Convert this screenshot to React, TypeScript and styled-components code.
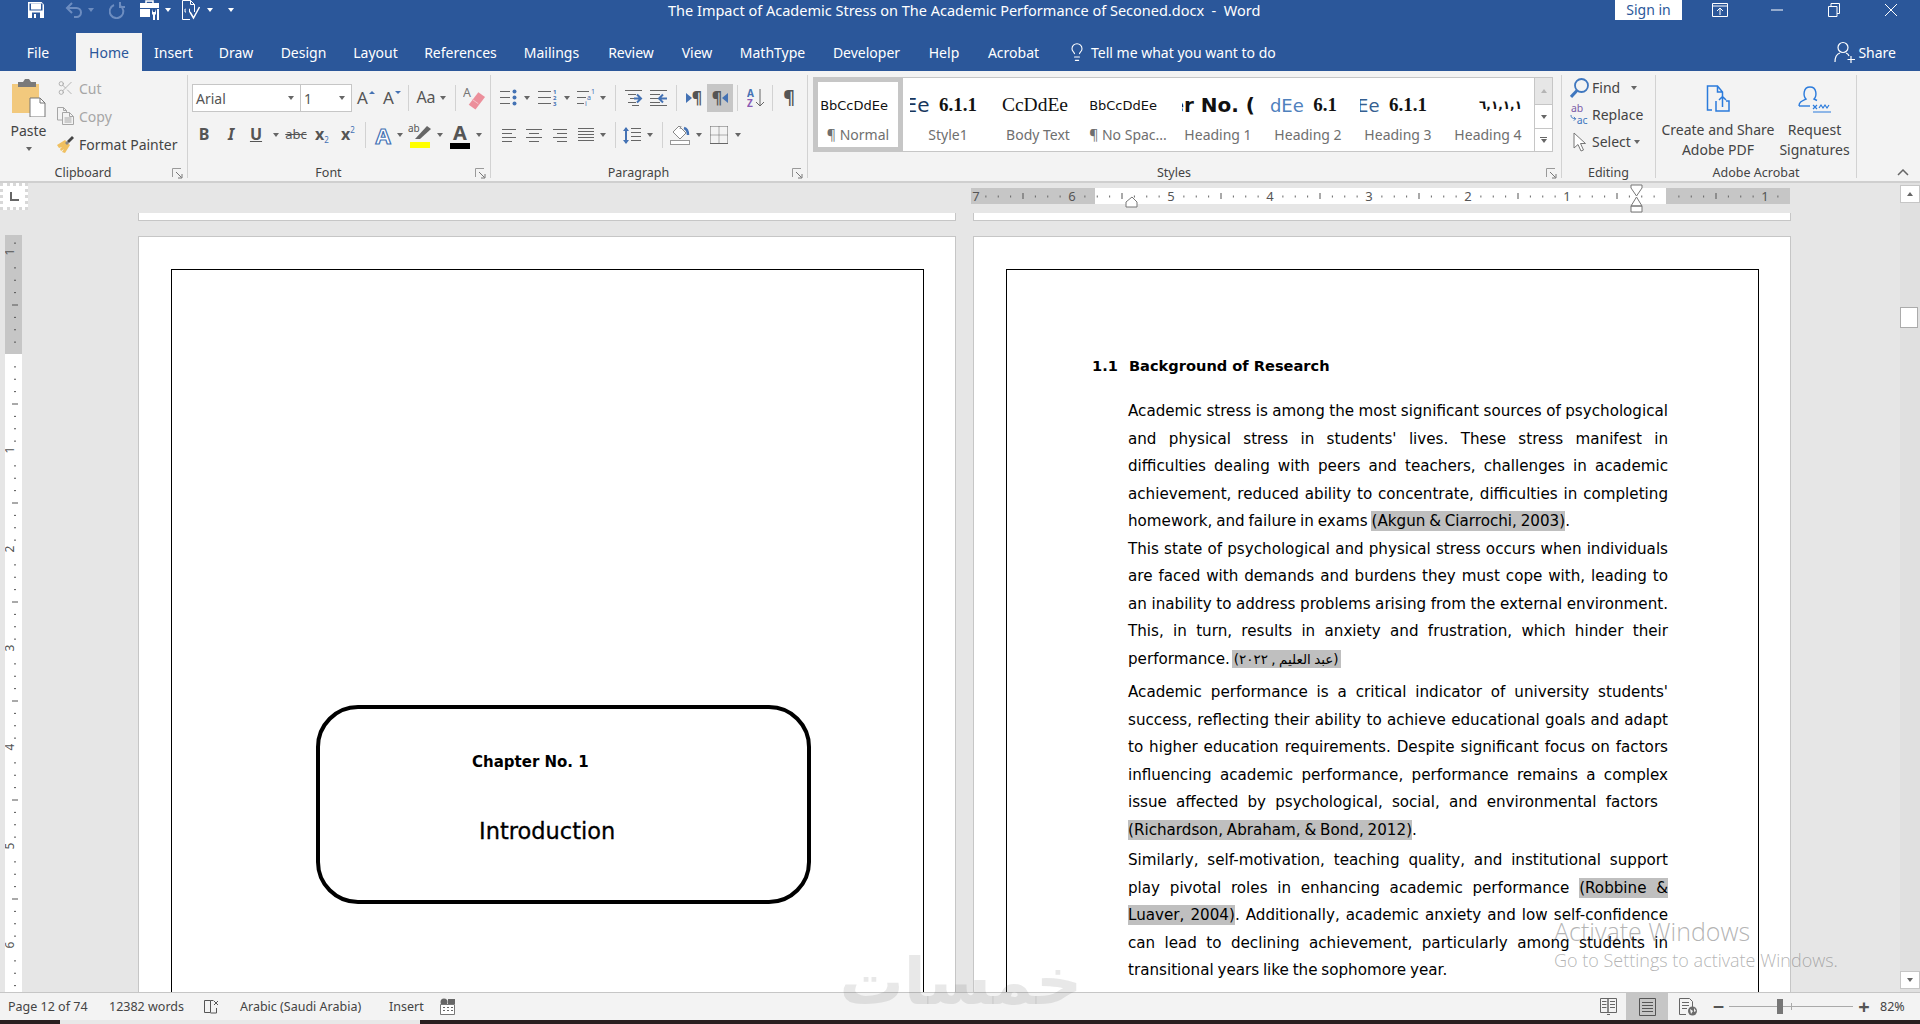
import styled, { createGlobalStyle } from "styled-components";
import { Lightbulb, Scissors } from "lucide-react";

const GlobalStyle = createGlobalStyle`
  html, body {
    margin: 0;
    padding: 0;
    height: 100%;
    overflow: hidden;
    background: #e6e6e6;
  }
  * { box-sizing: border-box; }
`;

const UI = `"Noto Sans", "Open Sans", sans-serif`;
const DOC = `"DejaVu Sans", "Noto Sans", sans-serif`;
const BLUE = "#2b579a";
const GREY = "#666666";
const ICON_BLUE = "#4472b4";
const ACROBAT = "#2b7bdc";

const Window = styled.div`
  position: relative;
  width: 1920px;
  height: 1024px;
  overflow: hidden;
  display: flex;
  flex-direction: column;
  font-family: ${UI};
  color: #444;
`;

/* ---------- title bar and tabs ---------- */
const TitleBar = styled.div`
  height: 33px;
  flex: none;
  background: ${BLUE};
  display: flex;
  align-items: flex-start;
  color: #fff;
`;
const QuickAccess = styled.div`
  width: 668px;
  height: 20px;
  flex: none;
  padding-left: 28px;
  display: flex;
  align-items: center;
`;
const QatSlot = styled.div<{ $w: number }>`
  width: ${(p) => p.$w}px;
  flex: none;
  display: flex;
  align-items: center;
`;
const DocTitle = styled.div`
  font-size: 14.5px;
  line-height: 20px;
  white-space: pre;
`;
const SignIn = styled.div`
  margin-left: auto;
  width: 67px;
  height: 20px;
  background: #fff;
  color: ${BLUE};
  font-size: 14px;
  line-height: 20px;
  text-align: center;
`;
const WinButtons = styled.div`
  width: 229px;
  margin-left: 9px;
  height: 20px;
  display: grid;
  grid-template-columns: repeat(4, 1fr);
  place-items: center;
`;
const TabBar = styled.div`
  height: 38px;
  flex: none;
  background: ${BLUE};
  display: flex;
  align-items: stretch;
`;
const Tab = styled.div<{ $w: number; $active?: boolean }>`
  width: ${(p) => p.$w}px;
  flex: none;
  display: flex;
  align-items: center;
  justify-content: center;
  font-size: 14px;
  color: ${(p) => (p.$active ? BLUE : "#fff")};
  background: ${(p) => (p.$active ? "#f3f3f3" : "transparent")};
`;
const TellMe = styled.div`
  margin-left: 15px;
  display: flex;
  align-items: center;
  gap: 4px;
  color: #fff;
  font-size: 14px;
`;
const Share = styled.div`
  margin-left: auto;
  margin-right: 24px;
  display: flex;
  align-items: center;
  gap: 2px;
  color: #fff;
  font-size: 14px;
`;

/* ---------- ribbon ---------- */
const Ribbon = styled.div`
  height: 112px;
  flex: none;
  background: #f3f3f3;
  border-bottom: 2px solid #cfcfcf;
  padding-top: 4px;
  display: flex;
  position: relative;
`;
const Group = styled.div<{ $w: number }>`
  width: ${(p) => p.$w}px;
  height: 103px;
  flex: none;
  border-right: 1px solid #d2d2d2;
  display: flex;
  flex-direction: column;
`;
const GroupBody = styled.div<{ $top?: number; $left?: number }>`
  flex: 1;
  display: flex;
  min-height: 0;
  padding-top: ${(p) => p.$top ?? 0}px;
  padding-left: ${(p) => p.$left ?? 0}px;
`;
const GroupFoot = styled.div<{ $launcher?: boolean }>`
  height: 16px;
  flex: none;
  margin-bottom: -3px;
  display: grid;
  grid-template-columns: 1fr ${(p) => (p.$launcher ? "21px" : "0")};
  align-items: center;
  justify-items: end;
  & > svg {
    margin-right: 4px;
  }
`;
const GroupLabel = styled.div`
  justify-self: stretch;
  font-size: 12.5px;
  line-height: 16px;
  text-align: center;
  color: #444;
`;
const Stack = styled.div`
  display: flex;
  flex-direction: column;
  gap: 9px;
`;
const ToolRow = styled.div`
  display: flex;
  align-items: center;
  height: 28px;
`;
const Slot = styled.div<{ $w: number; $active?: boolean }>`
  width: ${(p) => p.$w}px;
  height: 28px;
  flex: none;
  display: flex;
  align-items: center;
  justify-content: center;
  background: ${(p) => (p.$active ? "#c6c6c6" : "transparent")};
`;
const Sep = styled.div`
  width: 1px;
  height: 26px;
  background: #d2d2d2;
`;
const Caret = styled.span<{ $color?: string }>`
  display: inline-block;
  width: 0;
  height: 0;
  border-left: 3.5px solid transparent;
  border-right: 3.5px solid transparent;
  border-top: 4px solid ${(p) => p.$color ?? "#666"};
`;
const ComboBox = styled.div<{ $w: number }>`
  width: ${(p) => p.$w}px;
  height: 28px;
  flex: none;
  background: #fff;
  border: 1px solid #c6c6c6;
  margin-right: -1px;
  padding: 0 6px 0 3px;
  display: flex;
  align-items: center;
  justify-content: space-between;
  font-size: 14px;
  color: #555;
`;
const Glyph = styled.span<{ $size?: number; $bold?: boolean; $italic?: boolean; $line?: string; $font?: string }>`
  font-family: ${(p) => p.$font ?? UI};
  font-size: ${(p) => p.$size ?? 15}px;
  font-weight: ${(p) => (p.$bold ? 700 : 400)};
  font-style: ${(p) => (p.$italic ? "italic" : "normal")};
  text-decoration: ${(p) => p.$line ?? "none"};
  color: #555;
  line-height: 1.2;
  white-space: nowrap;
`;
const Sub = styled.span<{ $up?: boolean }>`
  font-size: 8px;
  font-weight: 400;
  color: ${ICON_BLUE};
  vertical-align: ${(p) => (p.$up ? "7px" : "-3px")};
`;
const TinyArrow = styled.span<{ $down?: boolean }>`
  display: inline-block;
  width: 0;
  height: 0;
  margin: 0 0 12px 1px;
  border-left: 3px solid transparent;
  border-right: 3px solid transparent;
  border-bottom: ${(p) => (p.$down ? "none" : `3px solid ${ICON_BLUE}`)};
  border-top: ${(p) => (p.$down ? `3px solid ${ICON_BLUE}` : "none")};
`;
const ColorA = styled.div`
  display: flex;
  flex-direction: column;
  align-items: center;
  line-height: 1;
`;
const ColorBar = styled.div<{ $color: string }>`
  width: 20px;
  height: 6px;
  background: ${(p) => p.$color};
  margin-top: -2px;
`;
const EffectA = styled.span`
  font-family: ${UI};
  font-size: 22px;
  font-weight: 700;
  line-height: 1.2;
  color: #fff;
  -webkit-text-stroke: 1.2px ${ICON_BLUE};
`;

/* clipboard */
const PasteCol = styled.div`
  width: 57px;
  flex: none;
  display: flex;
  flex-direction: column;
  align-items: center;
  padding-top: 4px;
`;
const PasteLabel = styled.div`
  font-size: 14px;
  line-height: 18px;
  margin-top: 5px;
  margin-bottom: 7px;
`;
const ClipList = styled.div`
  display: flex;
  flex-direction: column;
  margin-top: -1px;
`;
const ClipRow = styled.div<{ $muted?: boolean }>`
  height: 28px;
  display: flex;
  align-items: center;
  gap: 5px;
  font-size: 14px;
  color: ${(p) => (p.$muted ? "#a6a6a6" : "#444")};
`;
const ClipIcon = styled.div`
  width: 17px;
  display: flex;
  justify-content: center;
`;

/* styles gallery */
const Gallery = styled.div`
  margin: 2px 0 0 5px;
  width: 740px;
  height: 75px;
  background: #fff;
  border: 1px solid #c6c6c6;
  display: flex;
`;
const StyleItem = styled.div<{ $active?: boolean }>`
  width: 90px;
  flex: none;
  overflow: hidden;
  display: flex;
  flex-direction: column;
  align-items: center;
  border: ${(p) => (p.$active ? "5px solid #c6c6c6" : "none")};
  margin-top: ${(p) => (p.$active ? "-1px" : "0")};
  height: ${(p) => (p.$active ? "75px" : "100%")};
  margin-left: ${(p) => (p.$active ? "-1px" : "0")};
  padding-top: ${(p) => (p.$active ? "11px" : "15px")};
`;
const Preview = styled.div<{ $left: number; $right: number }>`
  align-self: stretch;
  height: 24px;
  overflow: hidden;
  display: flex;
  align-items: center;
  justify-content: flex-end;
  margin: 0 ${(p) => p.$right}px 0 ${(p) => p.$left}px;
  white-space: pre;
  flex: none;
`;
const PreviewText = styled.span<{ $font?: string; $size?: number; $bold?: boolean; $color?: string }>`
  font-family: ${(p) => p.$font ?? DOC};
  font-size: ${(p) => p.$size ?? 13}px;
  font-weight: ${(p) => (p.$bold ? 700 : 400)};
  color: ${(p) => p.$color ?? "#111"};
  flex: none;
`;
const StyleName = styled.div`
  margin-top: 9px;
  font-size: 14px;
  line-height: 18px;
  color: #6f6f6f;
  white-space: nowrap;
`;
const GalleryScroll = styled.div`
  width: 18px;
  flex: none;
  margin-left: auto;
  display: flex;
  flex-direction: column;
  border-left: 1px solid #c6c6c6;
`;
const ScrollStep = styled.div<{ $h: number; $off?: boolean }>`
  height: ${(p) => p.$h}px;
  display: flex;
  flex-direction: column;
  gap: 1px;
  align-items: center;
  justify-content: center;
  background: ${(p) => (p.$off ? "#e6e6e6" : "#fff")};
  & + & {
    border-top: 1px solid #c6c6c6;
  }
`;
const UpCaret = styled.span<{ $color?: string }>`
  width: 0;
  height: 0;
  border-left: 3.5px solid transparent;
  border-right: 3.5px solid transparent;
  border-bottom: 4px solid ${(p) => p.$color ?? "#b5b5b5"};
`;
const Dash = styled.span`
  width: 7px;
  height: 1px;
  background: #666;
`;

/* editing */
const EditList = styled.div`
  display: flex;
  flex-direction: column;
  margin-top: -1px;
`;
const EditRow = styled.div`
  height: 27px;
  display: flex;
  align-items: center;
  gap: 3px;
  font-size: 14px;
`;
const EditIcon = styled.div`
  width: 19px;
  display: flex;
  justify-content: center;
`;

/* acrobat */
const BigButton = styled.div<{ $w: number }>`
  width: ${(p) => p.$w}px;
  flex: none;
  display: flex;
  flex-direction: column;
  align-items: center;
  padding-top: 10px;
  font-size: 14px;
  line-height: 20px;
  text-align: center;
  color: #444;
`;
const BigIcon = styled.div`
  height: 35px;
  margin-bottom: 0;
`;
const Collapse = styled.div`
  position: absolute;
  right: 11px;
  bottom: 5px;
  display: flex;
`;

/* ---------- workspace ---------- */
const Workspace = styled.div`
  flex: 1;
  min-height: 0;
  background: #e6e6e6;
  display: flex;
  overflow: hidden;
`;
const DocArea = styled.div`
  flex: 1;
  min-width: 0;
  display: flex;
  flex-direction: column;
`;
const RulerRow = styled.div`
  height: 30px;
  flex: none;
  display: flex;
`;
const TabSelector = styled.div`
  width: 28px;
  height: 27px;
  flex: none;
  background: #fff;
  border: 3px dotted #d8d8d8;
  display: flex;
  align-items: center;
  justify-content: center;
`;
const HRulerWrap = styled.div`
  margin-left: 943px;
  height: 30px;
  flex: none;
`;
const DocRow = styled.div`
  flex: 1;
  min-height: 0;
  display: flex;
  align-items: flex-start;
`;
const VRulerWrap = styled.div`
  margin: 22px 0 0 5px;
  width: 17px;
  flex: none;
`;
const PageColumn = styled.div<{ $left: number }>`
  width: 818px;
  flex: none;
  margin-left: ${(p) => p.$left}px;
  display: flex;
  flex-direction: column;
`;
const PageStub = styled.div`
  height: 8px;
  background: #fff;
  border: 1px solid #c6c6c6;
  border-top: none;
  margin-bottom: 15px;
`;
const Page = styled.div`
  height: 900px;
  background: #fff;
  border: 1px solid #c6c6c6;
  border-bottom: none;
  padding: 32px 31px 0 32px;
`;
const PageFrame = styled.div<{ $top: number; $left: number }>`
  height: 860px;
  border: 1.5px solid #000;
  padding-top: ${(p) => p.$top}px;
  padding-left: ${(p) => p.$left}px;
`;
const ChapterBox = styled.div`
  width: 495px;
  height: 199px;
  border: 4px solid #000;
  border-radius: 42px;
  padding: 43px 0 0 152px;
  font-family: ${DOC};
  color: #000;
`;
const ChapterNo = styled.div`
  font-size: 15px;
  font-weight: 700;
  line-height: 20px;
  white-space: pre;
`;
const ChapterTitle = styled.div`
  margin: 44px 0 0 7px;
  font-size: 22.5px;
  line-height: 30px;
  -webkit-text-stroke: 0.3px #000;
`;
const SectionHead = styled.div`
  display: flex;
  height: 27px;
  margin-bottom: 19px;
  font-family: ${DOC};
  font-size: 14.6px;
  font-weight: 700;
  line-height: 27px;
  color: #000;
`;
const SectionNo = styled.div`
  width: 37px;
  flex: none;
`;
const BodyText = styled.div`
  margin-left: 36px;
  width: 540px;
  font-family: ${DOC};
  font-size: 15.15px;
  word-spacing: -1px;
  line-height: 27.5px;
  color: #000;
`;
const Line = styled.div<{ $end?: boolean; $gap?: number; $inset?: number }>`
  height: 27.5px;
  text-align: justify;
  text-align-last: ${(p) => (p.$end ? "left" : "justify")};
  margin-bottom: ${(p) => p.$gap ?? 0}px;
  padding-right: ${(p) => p.$inset ?? 0}px;
  white-space: normal;
`;
const Cite = styled.span`
  background: #bfbfbf;
  padding: 1px 0;
`;
const ArabicCite = styled.bdi`
  background: #bfbfbf;
  font-family: "DejaVu Sans", sans-serif;
  font-size: 13.5px;
  padding: 1px 2px;
  margin-left: 2px;
`;
const Scrollbar = styled.div`
  width: 20px;
  flex: none;
  margin-left: auto;
  padding: 2px 0 3px;
  background: #e0e0e0;
  display: flex;
  flex-direction: column;
`;
const ScrollBtn = styled.div`
  width: 20px;
  height: 18px;
  flex: none;
  background: #fff;
  border: 1px solid #c6c6c6;
  display: flex;
  align-items: center;
  justify-content: center;
`;
const ScrollThumb = styled.div`
  width: 18px;
  height: 21px;
  margin-top: 104px;
  background: #fff;
  border: 1px solid #ababab;
`;
const ScrollGap = styled.div`
  flex: 1;
`;

/* ---------- status bar ---------- */
const StatusBar = styled.div`
  height: 28px;
  flex: none;
  background: #f3f3f3;
  border-top: 1px solid #c6c6c6;
  padding-left: 8px;
  display: flex;
  align-items: stretch;
  font-size: 12.5px;
  color: #444;
`;
const StatusItem = styled.div<{ $w: number; $center?: boolean; $active?: boolean }>`
  width: ${(p) => p.$w}px;
  flex: none;
  display: flex;
  align-items: center;
  justify-content: ${(p) => (p.$center ? "center" : "flex-start")};
  background: ${(p) => (p.$active ? "#c6c6c6" : "transparent")};
`;
const StatusRight = styled.div`
  margin-left: auto;
  display: flex;
  align-items: stretch;
`;
const ZoomTrack = styled.div`
  position: relative;
  width: 124px;
  flex: none;
  display: flex;
  align-items: center;
`;
const ZoomLine = styled.div`
  width: 100%;
  height: 1px;
  background: #aaa;
`;
const ZoomTick = styled.div`
  position: absolute;
  left: 62px;
  top: 10px;
  width: 1px;
  height: 7px;
  background: #aaa;
`;
const ZoomThumb = styled.div`
  position: absolute;
  left: 48px;
  top: 6px;
  width: 6px;
  height: 15px;
  background: #777;
`;
const ZoomSign = styled.div`
  font-size: 20px;
  line-height: 1.2;
  color: #555;
  font-weight: 700;
`;
const ZoomValue = styled.div`
  width: 45px;
  padding-left: 5px;
  display: flex;
  align-items: center;
`;
const Taskbar = styled.div`
  height: 4px;
  flex: none;
  background: #2a1f20;
  padding-left: 60px;
`;
const TaskbarWindow = styled.div`
  width: 360px;
  height: 100%;
  background: #e8e8e8;
`;

/* ---------- overlays ---------- */
const Activation = styled.div`
  position: absolute;
  left: 1554px;
  top: 914px;
  font-family: "Open Sans", sans-serif;
  font-weight: 300;
  color: rgba(105, 105, 105, 0.5);
  pointer-events: none;
  white-space: nowrap;
`;
const ActivationTitle = styled.div`
  font-size: 25px;
  line-height: 34px;
`;
const ActivationSub = styled.div`
  font-size: 18px;
  line-height: 24px;
`;
const Watermark = styled.div`
  position: absolute;
  left: 850px;
  top: 942px;
  width: 232px;
  text-align: center;
  direction: rtl;
  font-family: "DejaVu Sans", sans-serif;
  font-weight: 700;
  font-size: 64px;
  line-height: 80px;
  color: rgba(90, 90, 90, 0.14);
  pointer-events: none;
`;

/* ---------- drawn icons ---------- */
const stroke = { fill: "none", stroke: GREY, strokeWidth: 1 };

function Launcher() {
  return (
    <svg width="11" height="11" viewBox="0 0 11 11">
      <path d="M.5 9V.5H9" {...stroke} stroke="#9a9a9a" />
      <path d="M4 4l5.5 5.5M10 6v4H6" {...stroke} stroke="#777" />
    </svg>
  );
}

function SaveIcon() {
  return (
    <svg width="16" height="16" viewBox="0 0 16 16">
      <path d="M0 0h13.5L16 2.5V16H0z" fill="#fff" />
      <rect x="1.5" y="1.5" width="13" height="7" fill={BLUE} />
      <rect x="3" y="1.5" width="10" height="6" fill="#fff" />
      <rect x="4" y="10.5" width="8" height="5.5" fill={BLUE} />
      <rect x="6" y="12" width="2" height="4" fill="#fff" />
    </svg>
  );
}

function UndoIcon() {
  return (
    <svg width="18" height="16" viewBox="0 0 18 16" fill="none" stroke="#6d8dc0" strokeWidth="2">
      <path d="M2 6h9.5a4.5 4.5 0 0 1 0 9H9" />
      <path d="M7 1 2 6l5 5" />
    </svg>
  );
}

function RedoIcon() {
  return (
    <svg width="16" height="17" viewBox="0 0 16 17" fill="none" stroke="#6d8dc0" strokeWidth="2">
      <path d="M5 3a6.8 6.8 0 1 0 6 .5" />
      <path d="M11 0v5h5" />
    </svg>
  );
}

function ToolsIcon() {
  return (
    <svg width="20" height="20" viewBox="0 0 20 20">
      <path d="M6 3V1h7v2" fill="none" stroke="#fff" strokeWidth="1.5" />
      <path d="M0 3h19v5H0zM0 9h10v8H0z" fill="#fff" />
      <path d="M12 9v5l1 1v5h2v-5l1-1V9l-1 3h-2zM17 9h2v11h-2z" fill="#fff" />
    </svg>
  );
}

function DocCheckIcon() {
  return (
    <svg width="19" height="21" viewBox="0 0 19 21" fill="none" stroke="#fff">
      <path d="M8 19.5H.5V.5h8l4 4V12M8.500 .5v4h4" />
      <path d="M8 12l3.500 6 6-11" strokeWidth="1.5" />
      <path d="M3.500 9H3v3h1M7 9h.5v3H7" />
    </svg>
  );
}

function RestoreRibbonIcon() {
  return (
    <svg width="16" height="14" viewBox="0 0 16 14" fill="none" stroke="#fff">
      <path d="M.5 .5h15v13H.5zM.5 3h15M8 12V5M5 8l3-3 3 3" />
    </svg>
  );
}

function MinimizeIcon() {
  return (
    <svg width="12" height="2" viewBox="0 0 12 2">
      <path d="M0 1h12" stroke="#fff" />
    </svg>
  );
}

function MaximizeIcon() {
  return (
    <svg width="12" height="14" viewBox="0 0 12 14" fill="none" stroke="#fff">
      <path d="M.5 3.500h8.500v10H.5zM3 3.500V.5h8.500v10H9" />
    </svg>
  );
}

function CloseIcon() {
  return (
    <svg width="14" height="14" viewBox="0 0 14 14" stroke="#fff">
      <path d="M1 1l12 12M13 1 1 13" />
    </svg>
  );
}

function ShareIcon() {
  return (
    <svg width="22" height="22" viewBox="0 0 22 22" fill="none" stroke="#fff" strokeWidth="1.2">
      <circle cx="9" cy="6.500" r="5" />
      <path d="M1 21c0-5 2-8 5-9M12 12c1.500.5 2.500 1.500 3 3M17 15v7M13.500 18.500h7.500" />
    </svg>
  );
}

function PasteIcon() {
  return (
    <svg width="36" height="38" viewBox="0 0 36 38">
      <path d="M1 5h27v29H1z" fill="#f2c97d" />
      <path d="M7 3h5l2-3h4l2 3h5v5H7z" fill="#7a7a7a" />
      <path d="M19 19h10l5 5v14H19z" fill="#fff" stroke="#777" />
      <path d="M29 19v5h5" fill="none" stroke="#777" />
    </svg>
  );
}

function CopyIcon() {
  return (
    <svg width="17" height="18" viewBox="0 0 17 18" fill="none" stroke="#a6a6a6">
      <path d="M5 13H.5V.5h6l3 3V5M6.500 .5v3h3" />
      <path d="M5.500 5.500h7l4 4v8h-11zM12.500 5.500v4h4M7.500 11h7M7.500 13h7M7.500 15h7" />
    </svg>
  );
}

function BrushIcon() {
  return (
    <svg width="17" height="17" viewBox="0 0 17 17">
      <path d="M0 9l8-5 5 5-5 8-3-1 2-3-3 2-1-2 2-2-3 1z" fill="#f0c060" />
      <path d="M8 7l2-2 2 2-2 2z" fill="#888" />
      <path d="M10 5l5-5 2 2-5 5z" fill="#444" />
    </svg>
  );
}

function EraserIcon() {
  return (
    <svg width="24" height="26" viewBox="0 0 24 26">
      <text x="0" y="12" fontSize="13" fontFamily="Noto Sans" fill="#777">A</text>
      <path d="M16 7l7 5-10 13-7-5z" fill="#ec8f9b" />
      <path d="M9 14l7 5" stroke="#f5c7cc" strokeWidth="1" />
    </svg>
  );
}

function HighlightIcon() {
  return (
    <svg width="24" height="21" viewBox="0 0 24 21">
      <text x="0" y="9" fontSize="10" fontFamily="Noto Sans" fill="#555">ab</text>
      <path d="M19 3l4 3-11 10H7z" fill="#666" />
    </svg>
  );
}

/** horizontal rules used by the list and alignment buttons */
function Rules({ w, rows, x = 0 }: { w: number; rows: [number, number, number?][]; x?: number }) {
  return (
    <svg width={w + x} height="18" viewBox={`0 0 ${w + x} 18`} stroke={GREY}>
      {rows.map(([y, x1, x2], i) => (
        <path key={i} d={`M${x + x1} ${y}.5H${x + (x2 ?? w)}`} />
      ))}
    </svg>
  );
}

function BulletsIcon() {
  return (
    <svg width="18" height="18" viewBox="0 0 18 18">
      <path d="M0 2.500h10M0 8.500h10M0 14.500h10" stroke={GREY} />
      <circle cx="14.500" cy="2.500" r="2" fill={ICON_BLUE} />
      <circle cx="14.500" cy="8.500" r="2" fill={ICON_BLUE} />
      <circle cx="14.500" cy="14.500" r="2" fill={ICON_BLUE} />
    </svg>
  );
}

function NumberingIcon() {
  return (
    <svg width="20" height="18" viewBox="0 0 20 18">
      <path d="M0 2.500h13M0 8.500h13M0 14.500h13" stroke={GREY} />
      <g fontSize="6" fontFamily="Noto Sans" fontWeight="700" fill={ICON_BLUE}>
        <text x="15" y="5">1</text>
        <text x="15" y="11">2</text>
        <text x="15" y="17">3</text>
      </g>
    </svg>
  );
}

function MultilevelIcon() {
  return (
    <svg width="20" height="18" viewBox="0 0 20 18">
      <path d="M1 2.500h12M1 8.500h9M1 14.500h7" stroke={GREY} />
      <g fontSize="7" fontFamily="Noto Sans" fill={ICON_BLUE}>
        <text x="15" y="5">1</text>
        <text x="11" y="11">a</text>
        <text x="9" y="17">i</text>
      </g>
    </svg>
  );
}

function IndentIcon({ flip }: { flip?: boolean }) {
  return (
    <svg width="19" height="18" viewBox="0 0 19 18">
      <path d={flip ? "M1 1.500h17M1 5.500h10M1 9.500h8M1 13.500h10M1 16.500h17" : "M1 1.500h17M4 5.500h8M6 9.500h6M4 13.500h8M8 16.500h7"} stroke={GREY} />
      <path d={flip ? "M18 9.500h-7M14 5.500l-4 4 4 4" : "M10 9.500h7M13 5.500l4 4-4 4"} fill="none" stroke={ICON_BLUE} strokeWidth="2" />
    </svg>
  );
}

function DirTriangle({ left }: { left?: boolean }) {
  return (
    <svg width="6" height="10" viewBox="0 0 6 10">
      <path d={left ? "M6 0v10L0 5z" : "M0 0v10l6-5z"} fill={ICON_BLUE} />
    </svg>
  );
}

function SortIcon() {
  return (
    <svg width="18" height="20" viewBox="0 0 18 20">
      <g fontFamily="Noto Sans" fontSize="10" fontWeight="700">
        <text x="0" y="9" fill={ICON_BLUE}>A</text>
        <text x="0" y="19" fill="#8a5bb5">Z</text>
      </g>
      <path d="M13 1v17M9 14l4 4 4-4" fill="none" stroke={GREY} />
    </svg>
  );
}

function LineSpacingIcon() {
  return (
    <svg width="18" height="19" viewBox="0 0 18 19">
      <path d="M8 2.500h10M8 6.500h10M8 10.500h10M8 14.500h10" stroke={GREY} />
      <path d="M3 2v15" stroke={ICON_BLUE} strokeWidth="2" />
      <path d="M0 5l3-4 3 4zM0 14l3 4 3-4z" fill={ICON_BLUE} />
    </svg>
  );
}

function ShadingIcon() {
  return (
    <svg width="20" height="20" viewBox="0 0 20 20">
      <path d="M9 1l7 7-6 6-7-7z" fill="#fff" stroke="#888" />
      <path d="M10 4l1-3" stroke="#888" />
      <path d="M14 3c3 1 4 3 4 7" fill="none" stroke={ICON_BLUE} strokeWidth="2.500" />
      <rect x=".5" y="15.500" width="19" height="4" fill="#fff" stroke="#999" />
    </svg>
  );
}

function BordersIcon() {
  return (
    <svg width="18" height="18" viewBox="0 0 18 18" fill="none" stroke={GREY}>
      <path d="M.5 .5h17M.5 .5v17M17.500 .5v17M9 .5v17M.5 9h17" strokeDasharray="1 1" />
      <path d="M0 17.500h18" />
    </svg>
  );
}

function FindIcon() {
  return (
    <svg width="19" height="20" viewBox="0 0 19 20" fill="none" stroke="#3f77bf">
      <circle cx="11.500" cy="7.500" r="6.500" strokeWidth="1.800" />
      <path d="M7 12.500 1 19" strokeWidth="3" />
    </svg>
  );
}

function ReplaceIcon() {
  return (
    <svg width="20" height="21" viewBox="0 0 20 21">
      <g fontFamily="Noto Sans" fontSize="11">
        <text x="1" y="8" fill="#7a5ca8">ab</text>
        <text x="7" y="20" fill="#3f77bf">ac</text>
      </g>
      <path d="M1 11c0 3 2 4 5 4M4 13l2 2-2 2" fill="none" stroke="#3f77bf" />
    </svg>
  );
}

function CursorIcon() {
  return (
    <svg width="13" height="20" viewBox="0 0 13 20" fill="#fff" stroke="#777">
      <path d="M1 1v15l4-3.500 3 6.500 2.500-1-3-6.500h5z" />
    </svg>
  );
}

function CreatePdfIcon() {
  return (
    <svg width="24" height="27" viewBox="0 0 24 27" fill="none" stroke={ACROBAT} strokeWidth="1.500">
      <path d="M6 25H1.500V1h10l5 6v4M11.500 1v6h5" />
      <path d="M10 16v10h13V16h-3M13 16h0M16.500 22v-10M13 15l3.500-3.500L20 15" />
    </svg>
  );
}

function SignatureIcon() {
  return (
    <svg width="33" height="28" viewBox="0 0 33 28" fill="none" stroke={ACROBAT} strokeWidth="1.400">
      <path d="M1 21c0-4 3-5 7-7-3-3-3-12 4-12s7 9 4 12l3 1.500" />
      <path d="M1 21h11" />
      <path d="M15 27h18M15 20l4 4M19 20l-4 4M21 23l2-3 2 3 2-3 2 3 2-3" strokeWidth="1.200" />
    </svg>
  );
}

function ChevronUp() {
  return (
    <svg width="12" height="7" viewBox="0 0 12 7" fill="none" stroke="#666" strokeWidth="1.500">
      <path d="M1 6l5-5 5 5" />
    </svg>
  );
}

function CornerL() {
  return (
    <svg width="10" height="10" viewBox="0 0 10 10">
      <path d="M1 0h2v7h7v2H1z" fill="#666" />
    </svg>
  );
}

function HRuler() {
  const zero = 695;
  const step = 99 / 8;
  const marks = [];
  for (let k = -55; k <= 9; k++) {
    const x = zero + k * step;
    if (k === 0) continue;
    if (k % 8 === 0) {
      marks.push(
        <text key={k} x={x} y="18" textAnchor="middle" fontSize="13" fontFamily="Noto Sans" fill="#555">
          {Math.abs(k / 8)}
        </text>
      );
    } else if (k % 4 === 0) {
      marks.push(<rect key={k} x={x} y="10" width="1" height="6" fill="#555" />);
    } else {
      marks.push(<rect key={k} x={x} y="12.500" width="1" height="2" fill="#666" />);
    }
  }
  return (
    <svg width="819" height="30" viewBox="0 0 819 30">
      <rect y="5" width="124" height="16" fill="#c6c6c6" />
      <rect x="124" y="5" width="571" height="16" fill="#fff" />
      <rect x="695" y="5" width="124" height="16" fill="#c6c6c6" />
      {marks}
      <text x="5" y="18" textAnchor="middle" fontSize="13" fontFamily="Noto Sans" fill="#555">7</text>
      <path d="M161 14l5 5v5h-11v-5z" fill="#fff" stroke="#777" />
      <path d="M660 2h11v3l-5.500 8L660 5zM660 23l5.500-9 5.500 9zM660 23h11v6h-11z" fill="#fff" stroke="#777" />
    </svg>
  );
}

function VRuler() {
  const zero = 119;
  const step = 99 / 8;
  const marks = [];
  for (let k = -9; k <= 52; k++) {
    const y = zero + k * step;
    if (k === 0) continue;
    if (k % 8 === 0) {
      marks.push(
        <text key={k} x="12" y={y} textAnchor="middle" fontSize="12" fontFamily="Noto Sans" fill="#555" transform={`rotate(-90 9 ${y})`}>
          {Math.abs(k / 8)}
        </text>
      );
    } else if (k % 4 === 0) {
      marks.push(<rect key={k} x="7" y={y} width="6" height="1" fill="#555" />);
    } else {
      marks.push(<rect key={k} x="9" y={y} width="2" height="1" fill="#555" />);
    }
  }
  return (
    <svg width="17" height="757" viewBox="0 0 17 757" style={{ display: "block" }}>
      <rect width="17" height="119" fill="#c6c6c6" />
      <rect y="119" width="17" height="638" fill="#fff" />
      {marks}
    </svg>
  );
}

function BookIcon() {
  return (
    <svg width="16" height="16" viewBox="0 0 16 16" fill="none" stroke="#555">
      <path d="M.5 1.500h6v12h-6zM6.500 1.500h3M12.500 9v5H6.500" />
      <path d="M10 2l4 4M14 2l-4 4" />
    </svg>
  );
}

function MacroIcon() {
  return (
    <svg width="15" height="17" viewBox="0 0 15 17">
      <circle cx="4" cy="4" r="3.500" fill="#666" />
      <rect x="8" y="1" width="7" height="5" fill="#666" />
      <path d="M.5 6.500h14v10H.5z" fill="#fff" stroke="#777" />
      <path d="M3 9.500h2M7 9.500h2M11 9.500h2M3 12.500h2M7 12.500h2M11 12.500h2" stroke="#666" />
    </svg>
  );
}

function ReadIcon() {
  return (
    <svg width="17" height="17" viewBox="0 0 17 17" fill="none" stroke="#666">
      <path d="M.5 .5h7.500v14H.5zM8 .5h8.500v14H8zM2 3.500h4.500M2 6.500h4.500M2 9.500h4.500M10 3.500h5M10 6.500h5M10 9.500h5M7 16.500h3" />
    </svg>
  );
}

function PrintIcon() {
  return (
    <svg width="17" height="18" viewBox="0 0 17 18" fill="none" stroke="#555">
      <path d="M.5 .5h16v17H.5zM3 4.500h11M3 7.500h11M3 10.500h11M3 13.500h11" />
    </svg>
  );
}

function WebIcon() {
  return (
    <svg width="19" height="18" viewBox="0 0 19 18">
      <path d="M.5 .5h10l3 3v6M7 16.500H.5V.5M3 4.500h7M3 7.500h7M3 10.500h5" fill="none" stroke="#666" />
      <circle cx="13.500" cy="13" r="4.500" fill="#6b6b6b" />
      <path d="M11 11l3 2-2 3zM15 10l2 3-2 1z" fill="#f3f3f3" />
    </svg>
  );
}

const tabs: [string, number][] = [
  ["File", 76],
  ["Home", 66],
  ["Insert", 63],
  ["Draw", 62],
  ["Design", 73],
  ["Layout", 71],
  ["References", 99],
  ["Mailings", 83],
  ["Review", 76],
  ["View", 56],
  ["MathType", 95],
  ["Developer", 93],
  ["Help", 62],
  ["Acrobat", 77],
];

function Pilcrow({ size = 16 }: { size?: number }) {
  return <Glyph $size={size} $bold>¶</Glyph>;
}

export default function App() {
  return (
    <>
      <GlobalStyle />
      <Window>
        <TitleBar>
          <QuickAccess>
            <QatSlot $w={37}><SaveIcon /></QatSlot>
            <QatSlot $w={23}><UndoIcon /></QatSlot>
            <QatSlot $w={21}><Caret $color="#6d8dc0" /></QatSlot>
            <QatSlot $w={31}><RedoIcon /></QatSlot>
            <QatSlot $w={25}><ToolsIcon /></QatSlot>
            <QatSlot $w={17}><Caret $color="#fff" /></QatSlot>
            <QatSlot $w={25}><DocCheckIcon /></QatSlot>
            <QatSlot $w={21}><Caret $color="#fff" /></QatSlot>
            <QatSlot $w={10}><Caret $color="#fff" /></QatSlot>
          </QuickAccess>
          <DocTitle>The Impact of Academic Stress on The Academic Performance of Seconed.docx  -  Word</DocTitle>
          <SignIn>Sign in</SignIn>
          <WinButtons>
            <RestoreRibbonIcon />
            <MinimizeIcon />
            <MaximizeIcon />
            <CloseIcon />
          </WinButtons>
        </TitleBar>
        <TabBar>
          {tabs.map(([name, w]) => (
            <Tab key={name} $w={w} $active={name === "Home"}>
              {name}
            </Tab>
          ))}
          <TellMe>
            <Lightbulb size={20} strokeWidth={1.3} />
            Tell me what you want to do
          </TellMe>
          <Share>
            <ShareIcon />
            Share
          </Share>
        </TabBar>

        <Ribbon>
          <Group $w={188}>
            <GroupBody>
              <PasteCol>
                <PasteIcon />
                <PasteLabel>Paste</PasteLabel>
                <Caret />
              </PasteCol>
              <ClipList>
                <ClipRow $muted>
                  <ClipIcon><Scissors size={18} strokeWidth={1.2} color="#a6a6a6" /></ClipIcon>
                  Cut
                </ClipRow>
                <ClipRow $muted>
                  <ClipIcon><CopyIcon /></ClipIcon>
                  Copy
                </ClipRow>
                <ClipRow>
                  <ClipIcon><BrushIcon /></ClipIcon>
                  Format Painter
                </ClipRow>
              </ClipList>
            </GroupBody>
            <GroupFoot $launcher>
              <GroupLabel>Clipboard</GroupLabel>
              <Launcher />
            </GroupFoot>
          </Group>

          <Group $w={303}>
            <GroupBody $top={9} $left={4}>
              <Stack>
                <ToolRow>
                  <ComboBox $w={109}>Arial<Caret /></ComboBox>
                  <ComboBox $w={52}>1<Caret /></ComboBox>
                  <Slot $w={30}><Glyph $size={17}>A</Glyph><TinyArrow /></Slot>
                  <Slot $w={22}><Glyph $size={17}>A</Glyph><TinyArrow $down /></Slot>
                  <Slot $w={10}><Sep /></Slot>
                  <Slot $w={26}><Glyph $size={16}>Aa</Glyph></Slot>
                  <Slot $w={8}><Caret /></Slot>
                  <Slot $w={16}><Sep /></Slot>
                  <Slot $w={23}><EraserIcon /></Slot>
                </ToolRow>
                <ToolRow>
                  <Slot $w={24}><Glyph $size={16} $bold>B</Glyph></Slot>
                  <Slot $w={30}><Glyph $size={16} $bold $italic>I</Glyph></Slot>
                  <Slot $w={20}><Glyph $size={16} $bold $line="underline">U</Glyph></Slot>
                  <Slot $w={20}><Caret /></Slot>
                  <Slot $w={20}><Glyph $size={13} $line="line-through">abc</Glyph></Slot>
                  <Slot $w={32}><Glyph $size={16} $bold>x<Sub>2</Sub></Glyph></Slot>
                  <Slot $w={20}><Glyph $size={16} $bold>x<Sub $up>2</Sub></Glyph></Slot>
                  <Slot $w={14}><Sep /></Slot>
                  <Slot $w={22}><EffectA>A</EffectA></Slot>
                  <Slot $w={12}><Caret /></Slot>
                  <Slot $w={28}>
                    <ColorA><HighlightIcon /><ColorBar $color="#ffff00" /></ColorA>
                  </Slot>
                  <Slot $w={12}><Caret /></Slot>
                  <Slot $w={28}>
                    <ColorA><Glyph $size={20} $bold>A</Glyph><ColorBar $color="#000" /></ColorA>
                  </Slot>
                  <Slot $w={10}><Caret /></Slot>
                </ToolRow>
              </Stack>
            </GroupBody>
            <GroupFoot $launcher>
              <GroupLabel>Font</GroupLabel>
              <Launcher />
            </GroupFoot>
          </Group>

          <Group $w={317}>
            <GroupBody $top={9} $left={6}>
              <Stack>
                <ToolRow>
                  <Slot $w={23}><BulletsIcon /></Slot>
                  <Slot $w={14}><Caret /></Slot>
                  <Slot $w={27}><NumberingIcon /></Slot>
                  <Slot $w={12}><Caret /></Slot>
                  <Slot $w={25}><MultilevelIcon /></Slot>
                  <Slot $w={10}><Caret /></Slot>
                  <Slot $w={14}><Sep /></Slot>
                  <Slot $w={22}><IndentIcon /></Slot>
                  <Slot $w={28}><IndentIcon flip /></Slot>
                  <Slot $w={9}><Sep /></Slot>
                  <Slot $w={26}><DirTriangle /><Pilcrow /></Slot>
                  <Slot $w={26} $active><Pilcrow /><DirTriangle left /></Slot>
                  <Slot $w={9}><Sep /></Slot>
                  <Slot $w={27}><SortIcon /></Slot>
                  <Slot $w={7}><Sep /></Slot>
                  <Slot $w={26}><Pilcrow size={18} /></Slot>
                </ToolRow>
                <ToolRow>
                  <Slot $w={24}><Rules w={14} rows={[[3, 0], [7, 0, 10], [11, 0], [15, 0, 10]]} /></Slot>
                  <Slot $w={26}><Rules w={16} rows={[[3, 0], [7, 3, 13], [11, 0], [15, 3, 13]]} /></Slot>
                  <Slot $w={26}><Rules w={14} rows={[[3, 0], [7, 4], [11, 0], [15, 4]]} /></Slot>
                  <Slot $w={25}><Rules w={16} rows={[[2, 0], [5, 0], [8, 0], [11, 0], [14, 0]]} /></Slot>
                  <Slot $w={10}><Caret /></Slot>
                  <Slot $w={14}><Sep /></Slot>
                  <Slot $w={20}><LineSpacingIcon /></Slot>
                  <Slot $w={16}><Caret /></Slot>
                  <Slot $w={8}><Sep /></Slot>
                  <Slot $w={28}><ShadingIcon /></Slot>
                  <Slot $w={10}><Caret /></Slot>
                  <Slot $w={29}><BordersIcon /></Slot>
                  <Slot $w={10}><Caret /></Slot>
                </ToolRow>
              </Stack>
            </GroupBody>
            <GroupFoot $launcher>
              <GroupLabel>Paragraph</GroupLabel>
              <Launcher />
            </GroupFoot>
          </Group>

          <Group $w={754}>
            <GroupBody>
              <Gallery>
                <StyleItem $active>
                  <Preview $left={3} $right={10}><PreviewText>AaBbCcDdEe</PreviewText></Preview>
                  <StyleName>¶ Normal</StyleName>
                </StyleItem>
                <StyleItem>
                  <Preview $left={7} $right={16}>
                    <PreviewText $size={20} $color="#17365d">Ee</PreviewText>
                    <PreviewText $font="Liberation Serif" $size={19} $bold>  6.1.1</PreviewText>
                  </Preview>
                  <StyleName>Style1</StyleName>
                </StyleItem>
                <StyleItem>
                  <Preview $left={8} $right={15}><PreviewText $font="Liberation Serif" $size={19.5}>CcDdEe</PreviewText></Preview>
                  <StyleName>Body Text</StyleName>
                </StyleItem>
                <StyleItem>
                  <Preview $left={7} $right={16}><PreviewText>AaBbCcDdEe</PreviewText></Preview>
                  <StyleName>¶ No Spac...</StyleName>
                </StyleItem>
                <StyleItem>
                  <Preview $left={9} $right={8}><PreviewText $size={20} $bold>pter No. (</PreviewText></Preview>
                  <StyleName>Heading 1</StyleName>
                </StyleItem>
                <StyleItem>
                  <Preview $left={4} $right={16}>
                    <PreviewText $size={18} $color="#4f81bd">dEe</PreviewText>
                    <PreviewText $font="Liberation Serif" $size={19} $bold>  6.1</PreviewText>
                  </Preview>
                  <StyleName>Heading 2</StyleName>
                </StyleItem>
                <StyleItem>
                  <Preview $left={7} $right={16}>
                    <PreviewText $size={18} $color="#365f91">Ee</PreviewText>
                    <PreviewText $font="Liberation Serif" $size={19} $bold>  6.1.1</PreviewText>
                  </Preview>
                  <StyleName>Heading 3</StyleName>
                </StyleItem>
                <StyleItem>
                  <Preview $left={7} $right={11}><PreviewText $font="DejaVu Sans" $size={12} $bold>٦,١,١,١</PreviewText></Preview>
                  <StyleName>Heading 4</StyleName>
                </StyleItem>
                <GalleryScroll>
                  <ScrollStep $h={26} $off><UpCaret /></ScrollStep>
                  <ScrollStep $h={24}><Caret /></ScrollStep>
                  <ScrollStep $h={23}><Dash /><Caret /></ScrollStep>
                </GalleryScroll>
              </Gallery>
            </GroupBody>
            <GroupFoot $launcher>
              <GroupLabel>Styles</GroupLabel>
              <Launcher />
            </GroupFoot>
          </Group>

          <Group $w={94}>
            <GroupBody $left={8}>
              <EditList>
                <EditRow><EditIcon><FindIcon /></EditIcon>Find<Slot $w={22}><Caret /></Slot></EditRow>
                <EditRow><EditIcon><ReplaceIcon /></EditIcon>Replace</EditRow>
                <EditRow><EditIcon><CursorIcon /></EditIcon>Select<Caret /></EditRow>
              </EditList>
            </GroupBody>
            <GroupFoot>
              <GroupLabel>Editing</GroupLabel>
            </GroupFoot>
          </Group>

          <Group $w={201}>
            <GroupBody $left={5}>
              <BigButton $w={114}>
                <BigIcon><CreatePdfIcon /></BigIcon>
                Create and Share
                <br />
                Adobe PDF
              </BigButton>
              <BigButton $w={79}>
                <BigIcon><SignatureIcon /></BigIcon>
                Request
                <br />
                Signatures
              </BigButton>
            </GroupBody>
            <GroupFoot>
              <GroupLabel>Adobe Acrobat</GroupLabel>
            </GroupFoot>
          </Group>
          <Collapse><ChevronUp /></Collapse>
        </Ribbon>

        <Workspace>
          <DocArea>
            <RulerRow>
              <TabSelector><CornerL /></TabSelector>
              <HRulerWrap><HRuler /></HRulerWrap>
            </RulerRow>
            <DocRow>
              <VRulerWrap><VRuler /></VRulerWrap>
              <PageColumn $left={116}>
                <PageStub />
                <Page>
                  <PageFrame $top={435} $left={144}>
                    <ChapterBox>
                      <ChapterNo>Chapter No. 1</ChapterNo>
                      <ChapterTitle>Introduction</ChapterTitle>
                    </ChapterBox>
                  </PageFrame>
                </Page>
              </PageColumn>
              <PageColumn $left={17}>
                <PageStub />
                <Page>
                  <PageFrame $top={82} $left={85}>
                    <SectionHead>
                      <SectionNo>1.1</SectionNo>
                      Background of Research
                    </SectionHead>
                    <BodyText>
                      <Line>Academic stress is among the most significant sources of psychological</Line>
                      <Line>and physical stress in students' lives. These stress manifest in</Line>
                      <Line>difficulties dealing with peers and teachers, challenges in academic</Line>
                      <Line>achievement, reduced ability to concentrate, difficulties in completing</Line>
                      <Line $end>homework, and failure in exams <Cite>(Akgun &amp; Ciarrochi, 2003)</Cite>.</Line>
                      <Line>This state of psychological and physical stress occurs when individuals</Line>
                      <Line>are faced with demands and burdens they must cope with, leading to</Line>
                      <Line>an inability to address problems arising from the external environment.</Line>
                      <Line>This, in turn, results in anxiety and frustration, which hinder their</Line>
                      <Line $end $gap={6}>performance.<ArabicCite dir="rtl">(عبد العليم , ٢٠٢٢)</ArabicCite></Line>
                      <Line>Academic performance is a critical indicator of university students'</Line>
                      <Line>success, reflecting their ability to achieve educational goals and adapt</Line>
                      <Line>to higher education requirements. Despite significant focus on factors</Line>
                      <Line>influencing academic performance, performance remains a complex</Line>
                      <Line $inset={10}>issue affected by psychological, social, and environmental factors</Line>
                      <Line $end $gap={3}><Cite>(Richardson, Abraham, &amp; Bond, 2012)</Cite>.</Line>
                      <Line>Similarly, self-motivation, teaching quality, and institutional support</Line>
                      <Line>play pivotal roles in enhancing academic performance <Cite>(Robbine &amp;</Cite></Line>
                      <Line><Cite>Luaver, 2004)</Cite>. Additionally, academic anxiety and low self-confidence</Line>
                      <Line>can lead to declining achievement, particularly among students in</Line>
                      <Line $end>transitional years like the sophomore year.</Line>
                    </BodyText>
                  </PageFrame>
                </Page>
              </PageColumn>
            </DocRow>
          </DocArea>
          <Scrollbar>
            <ScrollBtn><UpCaret $color="#666" /></ScrollBtn>
            <ScrollThumb />
            <ScrollGap />
            <ScrollBtn><Caret /></ScrollBtn>
          </Scrollbar>
        </Workspace>

        <StatusBar>
          <StatusItem $w={101}>Page 12 of 74</StatusItem>
          <StatusItem $w={95}>12382 words</StatusItem>
          <StatusItem $w={36}><BookIcon /></StatusItem>
          <StatusItem $w={149}>Arabic (Saudi Arabia)</StatusItem>
          <StatusItem $w={51}>Insert</StatusItem>
          <StatusItem $w={20}><MacroIcon /></StatusItem>
          <StatusRight>
            <StatusItem $w={36} $center><ReadIcon /></StatusItem>
            <StatusItem $w={42} $center $active><PrintIcon /></StatusItem>
            <StatusItem $w={40} $center><WebIcon /></StatusItem>
            <StatusItem $w={21} $center><ZoomSign>−</ZoomSign></StatusItem>
            <ZoomTrack>
              <ZoomLine />
              <ZoomTick />
              <ZoomThumb />
            </ZoomTrack>
            <StatusItem $w={22} $center><ZoomSign>+</ZoomSign></StatusItem>
            <ZoomValue>82%</ZoomValue>
          </StatusRight>
        </StatusBar>
        <Taskbar><TaskbarWindow /></Taskbar>

        <Activation>
          <ActivationTitle>Activate Windows</ActivationTitle>
          <ActivationSub>Go to Settings to activate Windows.</ActivationSub>
        </Activation>
        <Watermark>خمسات</Watermark>
      </Window>
    </>
  );
}
